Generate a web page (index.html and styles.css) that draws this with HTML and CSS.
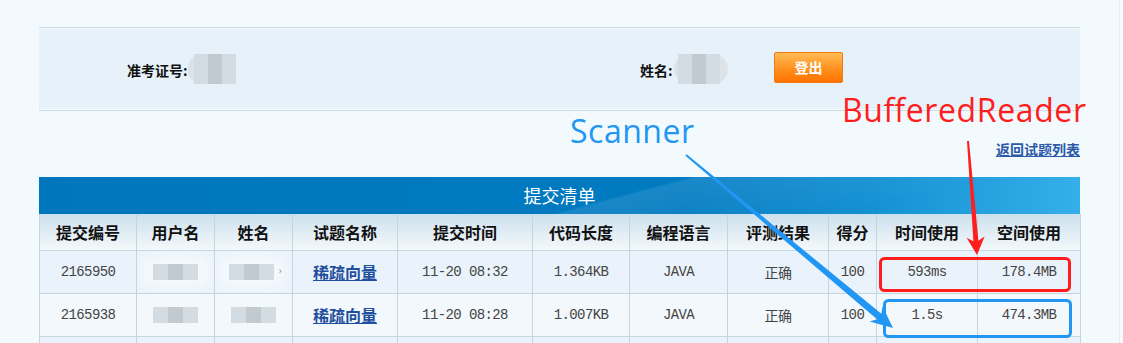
FILE: index.html
```html
<!DOCTYPE html>
<html lang="zh-CN">

<head>
    <meta charset="UTF-8">
    <title>提交清单</title>
    <link rel="stylesheet" href="styles.css">
</head>

<body>
    <div class="page">
        <div class="main">

            <!-- 考生信息 -->
            <div class="info">
                <div class="info-item ticket">
                    <b>准考证号:</b>
                    <span class="blur wide"><i></i><i></i><i></i></span>
                </div>
                <div class="info-item name">
                    <b>姓名:</b>
                    <span class="blur wide round"><i></i><i></i><i></i></span>
                </div>
                <button class="logout">登出</button>
            </div>

            <div class="back"><a href="#">返回试题列表</a></div>

            <!-- 提交清单 -->
            <div class="list-title">提交清单</div>
            <table class="list">
                <colgroup>
                    <col style="width:97px">
                    <col style="width:78px">
                    <col style="width:78px">
                    <col style="width:105px">
                    <col style="width:135px">
                    <col style="width:97px">
                    <col style="width:98px">
                    <col style="width:101px">
                    <col style="width:48px">
                    <col style="width:101px">
                    <col style="width:103px">
                </colgroup>
                <thead>
                    <tr>
                        <th>提交编号</th>
                        <th>用户名</th>
                        <th>姓名</th>
                        <th>试题名称</th>
                        <th>提交时间</th>
                        <th>代码长度</th>
                        <th>编程语言</th>
                        <th>评测结果</th>
                        <th>得分</th>
                        <th>时间使用</th>
                        <th>空间使用</th>
                    </tr>
                </thead>
                <tbody>
                    <tr class="odd">
                        <td>2165950</td>
                        <td><span class="blur cell"><i></i><i></i><i></i></span></td>
                        <td><span class="blur cell"><i></i><i></i><i></i></span><span class="tail">›</span></td>
                        <td><a href="#">稀疏向量</a></td>
                        <td>11-20 08:32</td>
                        <td>1.364KB</td>
                        <td>JAVA</td>
                        <td>正确</td>
                        <td>100</td>
                        <td>593ms</td>
                        <td>178.4MB</td>
                    </tr>
                    <tr class="even">
                        <td>2165938</td>
                        <td><span class="blur cell"><i></i><i></i><i></i></span></td>
                        <td><span class="blur cell"><i></i><i></i><i></i></span></td>
                        <td><a href="#">稀疏向量</a></td>
                        <td>11-20 08:28</td>
                        <td>1.007KB</td>
                        <td>JAVA</td>
                        <td>正确</td>
                        <td>100</td>
                        <td>1.5s</td>
                        <td>474.3MB</td>
                    </tr>
                    <tr class="odd">
                        <td></td><td></td><td></td><td></td><td></td><td></td>
                        <td></td><td></td><td></td><td></td><td></td>
                    </tr>
                </tbody>
            </table>
        </div>

        <!-- 截图标注 -->
        <svg class="marks" width="1123" height="343" viewBox="0 0 1123 343">
            <text class="mark-blue" x="570" y="143" textLength="124">Scanner</text>
            <text class="mark-red" x="842" y="122" textLength="244">BufferedReader</text>
            <polygon fill="#ff1e1e"
                points="969,140.9 978.4,240.8 984.6,236.4 977,255 966.6,237.8 973.4,241.2 967,141.1" />
            <polygon fill="#2196f3"
                points="686.6,154.2 881.4,313.8 882.5,306.2 893,328 869.7,321.6 877,319.2 685.4,155.8" />
            <rect x="880.5" y="258.5" width="189" height="32" rx="4" fill="none" stroke="#ff1e1e" stroke-width="3" />
            <rect x="884.5" y="300.5" width="186" height="36" rx="4" fill="none" stroke="#2196f3" stroke-width="3" />
        </svg>
    </div>
</body>

</html>
```

FILE: styles.css
```css
body {
    margin: 0;
    background-color: #f7fafb;
    font-family: "Noto Sans CJK SC", sans-serif;
    color: #333;
}

.page {
    position: relative;
    width: 1119px;
    height: 343px;
    overflow: hidden;
    background-color: #f3fafe;
    border-right: 1px solid #e2ebf0;
}

.main {
    margin-left: 39px;
    width: 1041px;
    padding-top: 27px;
}

/* 考生信息 */
.info {
    display: flex;
    align-items: center;
    height: 82px;
    background-color: #e6f1f9;
    border-top: 1px solid #c7dbe8;
    border-bottom: 1px solid #c7dbe8;
    box-shadow: inset 0 1px 0 #f6fbfe, inset 0 -1px 0 #f6fbfe;
    font-size: 14px;
    color: #111;
}

.info-item {
    display: flex;
    align-items: center;
}

.ticket {
    margin-left: 88px;
    width: 513px;
}

.name {
    width: 134px;
}

.info-item b {
    margin-top: 2px;
}

.blur {
    display: inline-flex;
    align-items: stretch;
}

.blur i {
    display: block;
    width: 14px;
    background-color: #d3dce3;
}

.blur i:nth-child(2) {
    background-color: #c2cad0;
}

.wide {
    height: 30px;
    padding-left: 6px;
    border-radius: 14px 0 0 14px;
    background-color: #dbe3e9;
}

.wide.round {
    padding-left: 4px;
    padding-right: 8px;
    margin-left: 1px;
    border-radius: 15px;
    background-color: #dce4ea;
}

.wide i {
    height: 30px;
}

.logout {
    width: 69px;
    height: 31px;
    margin-top: -4px;
    border: 1px solid #f07a10;
    border-radius: 2px;
    background: linear-gradient(#ffbc55, #ff8c1a 60%, #ff7300);
    color: #fff;
    font-family: "Noto Sans CJK SC", sans-serif;
    font-size: 14px;
    font-weight: bold;
    padding: 0;
}

.back {
    height: 66px;
    text-align: right;
    font-size: 14px;
    font-weight: bold;
}

.back a {
    display: inline-block;
    margin-top: 28px;
    color: #2b5ba8;
}

/* 提交清单 */
.list-title {
    height: 37px;
    line-height: 36px;
    text-align: center;
    color: #fff;
    font-size: 18px;
    background:
        linear-gradient(165deg, rgba(255, 255, 255, 0) 55%, rgba(255, 255, 255, 0.1) 56%, rgba(255, 255, 255, 0) 80%),
        linear-gradient(90deg, #0077bd 0%, #007ac1 62%, #1591d3 80%, #34afe9 100%);
}

.list {
    width: 1041px;
    table-layout: fixed;
    border-collapse: collapse;
    border-left: 1px solid #c2d6e0;
}

.list th,
.list td {
    border: 1px solid #c2d6e0;
    border-top: none;
    text-align: center;
    padding: 0;
    white-space: nowrap;
    overflow: hidden;
}

.list th {
    height: 36px;
    font-size: 16px;
    font-weight: bold;
    color: #111;
    background: linear-gradient(#cde0ed, #f3f8fb);
}

.list td {
    height: 42px;
    font-family: "Liberation Mono", "Noto Sans CJK SC", monospace;
    font-size: 14px;
    letter-spacing: -0.6px;
    color: #444;
}

.list tr.odd td {
    background-color: #eaf3fb;
}

.list tr.even td {
    background-color: #f3f8fc;
}

.list td a {
    font-family: "Noto Sans CJK SC", sans-serif;
    font-size: 16px;
    font-weight: bold;
    letter-spacing: 0;
    color: #1f4f9e;
}

.cell {
    vertical-align: middle;
    height: 16px;
    padding: 0 4px;
    box-shadow: 0 0 12px 10px #f3f8fc;
    background-color: #f3f8fc;
    border-radius: 8px;
}

.cell i {
    width: 15px;
}

.tail {
    font-size: 9px;
    color: #888;
    vertical-align: middle;
}

/* 截图标注 */
.marks {
    position: absolute;
    top: 0;
    left: 0;
}

.marks text {
    font-family: "Open Sans", sans-serif;
    font-size: 32px;
}

.mark-blue {
    fill: #2196f3;
}

.mark-red {
    fill: #ff1e1e;
}
```
